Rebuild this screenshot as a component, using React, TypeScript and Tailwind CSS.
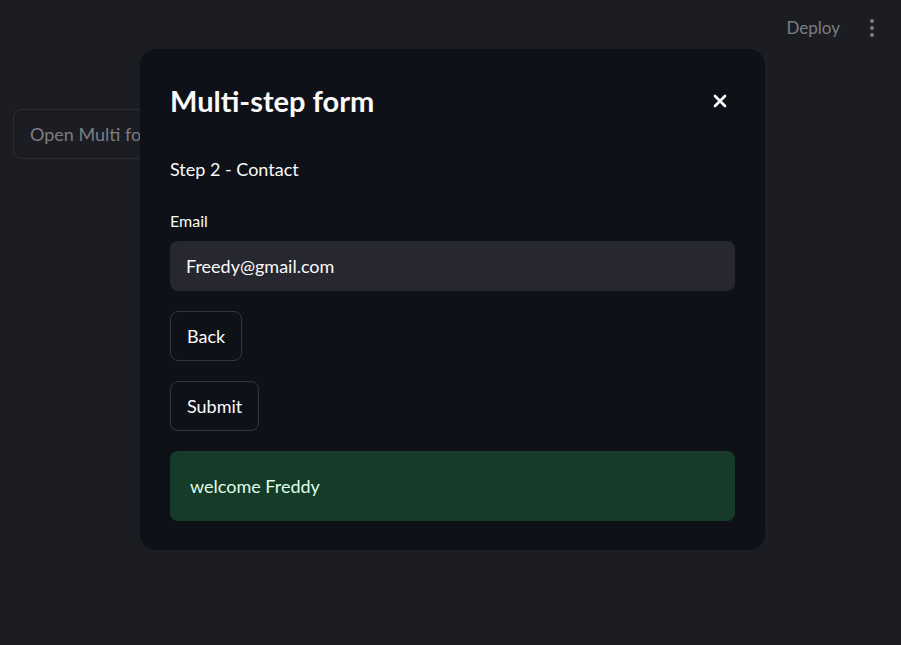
import React from 'react';

const font = { fontFamily: '"Source Sans Pro", Lato, "Noto Sans", sans-serif' };

export default function App() {
  return (
    <div className="relative h-[645px] w-full overflow-hidden bg-[#1c1d22]" style={font}>
      {/* page behind the dialog */}
      <div className="flex h-[56px] items-center justify-end gap-[30px] pr-[27px]">
        <span className="text-[17px] text-[#7b7d82]">Deploy</span>
        <div className="flex flex-col gap-[3px]">
          <span className="h-[4px] w-[4px] rounded-full bg-[#7b7d82]" />
          <span className="h-[4px] w-[4px] rounded-full bg-[#7b7d82]" />
          <span className="h-[4px] w-[4px] rounded-full bg-[#7b7d82]" />
        </div>
      </div>
      <div className="pl-[13px] pt-[53px]">
        <button className="h-[50px] rounded-[8px] border border-[#2c2d33] px-[16px] text-[18px] text-[#7b7d82]">
          Open Multi form
        </button>
      </div>

      {/* dialog */}
      <div className="absolute left-[140px] top-[49px] w-[625px] rounded-[16px] bg-[#0e1117] px-[30px] pb-[29px] pt-[30px] text-[#fafafa]">
        <div className="flex items-center justify-between">
          <h2 className="text-[29px] font-bold leading-[44px]">Multi-step form</h2>
          <button className="mr-[8px] text-white">
            <svg width="14" height="14" viewBox="0 0 14 14" fill="none">
              <path d="M2 2L12 12M12 2L2 12" stroke="currentColor" strokeWidth="2.6" strokeLinecap="round" />
            </svg>
          </button>
        </div>

        <p className="mt-[32px] text-[18px] leading-[28px]">Step 2 - Contact</p>

        <label className="mt-[28px] block text-[16px] leading-[20px]">Email</label>
        <div className="mt-[10px] flex h-[50px] items-center rounded-[8px] bg-[#262730] px-[16px] text-[18px]">
          Freedy@gmail.com
        </div>

        <div className="mt-[20px] flex flex-col items-start gap-[20px]">
          <button className="h-[50px] rounded-[8px] border border-[#34363e] bg-[#0e1117] px-[16px] text-[18px]">
            Back
          </button>
          <button className="h-[50px] rounded-[8px] border border-[#34363e] bg-[#0e1117] px-[16px] text-[18px]">
            Submit
          </button>
        </div>

        <div className="mt-[20px] flex h-[70px] items-center rounded-[8px] bg-[#173b29] px-[20px] text-[18px] text-[#dffde9]">
          welcome Freddy
        </div>
      </div>
    </div>
  );
}
